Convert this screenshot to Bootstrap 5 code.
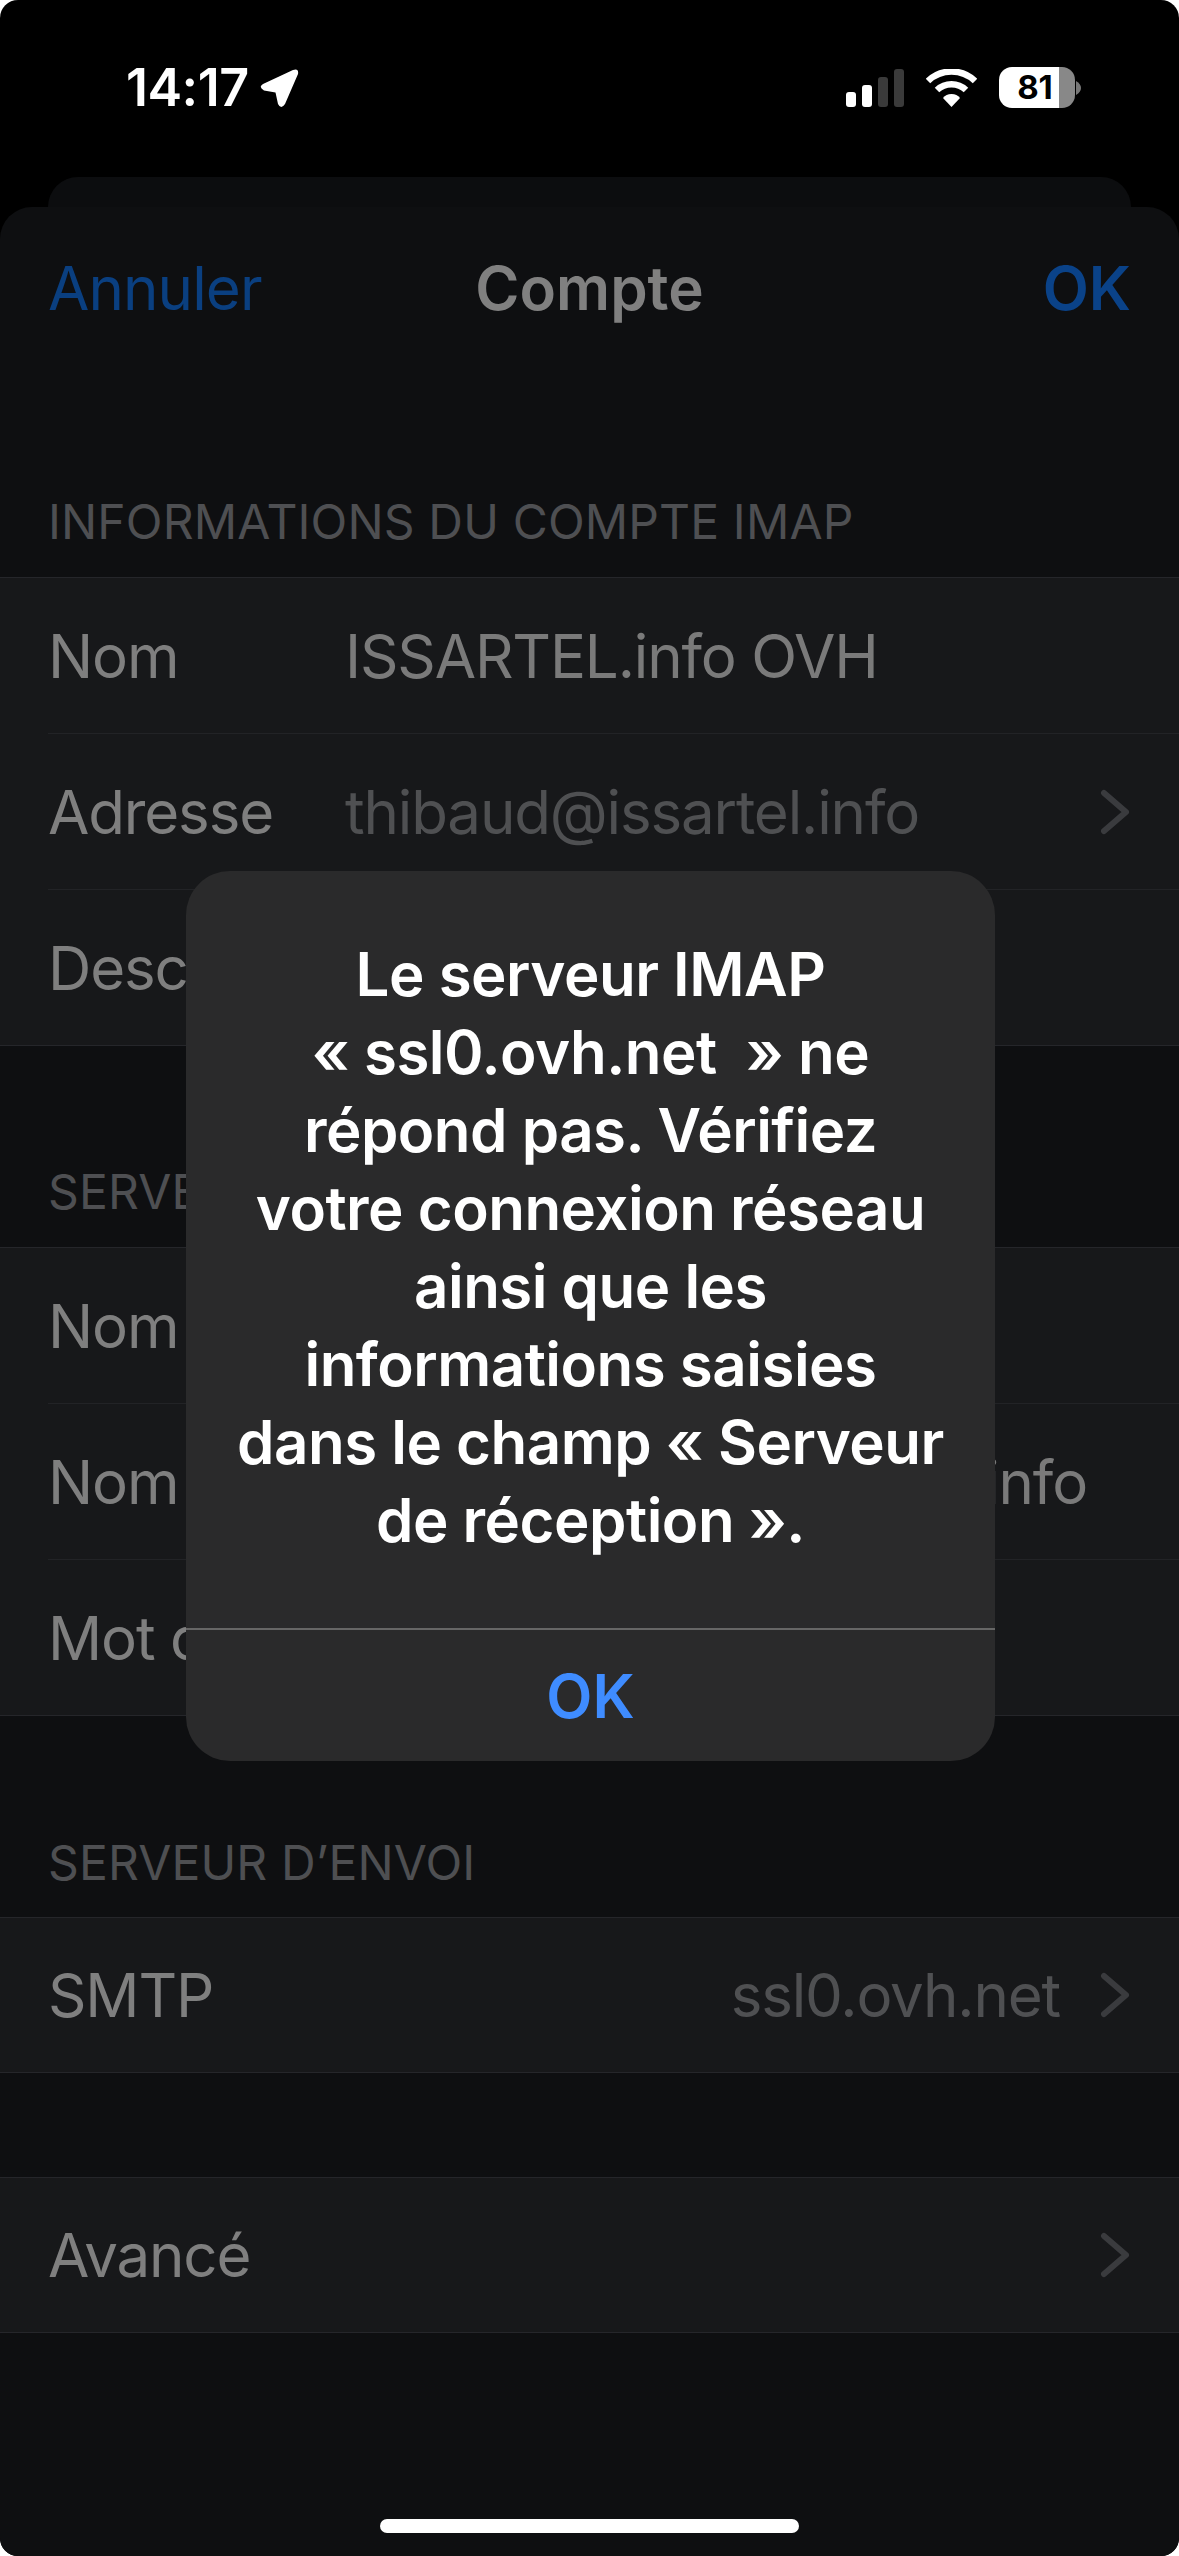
<!DOCTYPE html>
<html lang="fr">
<head>
    <meta charset="UTF-8">
    <meta name="viewport" content="width=device-width, initial-scale=1.0">
    <title>Compte</title>
    <link href="https://cdn.jsdelivr.net/npm/bootstrap@5.3.0/dist/css/bootstrap.min.css" rel="stylesheet">
    <style>
        html, body { height: 2556px; overflow: hidden; }
        body { background: #fff; font-family: Inter, "Liberation Sans", sans-serif; color: #7f7f7f; }
        .phone { position: relative; width: 1179px; height: 2556px; overflow: hidden; background: #000; border-radius: 18px; }

        /* status bar */
        .status-bar { height: 177px; padding: 67px 98px 0 126px; align-items: flex-start; }
        .clock { width: 121px; font-size: 52px; line-height: 42px; font-weight: 600; color: #fff; letter-spacing: -.5px; white-space: nowrap; }
        .clock-arrow { margin-left: 13px; margin-top: 2px; }
        .status-icons { gap: 22px; }
        .batt { width: 76px; height: 41px; border-radius: 13px; overflow: hidden; background: linear-gradient(90deg, #fff 79%, #888 79%); color: #000; font-size: 33px; font-weight: 700; line-height: 41px; text-align: center; padding-right: 4px; }

        /* sheets */
        .sheet-back { height: 30px; margin: 0 48px; background: #0c0d0f; border-radius: 30px 30px 0 0; }
        .sheet { height: 2349px; background: #0e0f11; border-radius: 32px 32px 0 0; }
        .sheet-nav { height: 162px; padding: 0 48px; font-size: 60px; }
        .nav-side { flex: 1 1 0; }
        .nav-cancel { color: #0a3f80; letter-spacing: -.9px; }
        .nav-title { color: #808080; font-weight: 600; }
        .nav-ok { color: #0a4288; font-weight: 600; text-align: right; }

        .group-title { padding: 0 48px 25px; font-size: 48px; line-height: 60px; color: #4e4f52; letter-spacing: .15px; }
        .group-title-1 { height: 208px; }
        .group-title-2 { height: 201px; }
        .group-title-3 { height: 201px; padding-bottom: 24px; }
        .group-gap { height: 104px; }

        .settings-list { background: #17181a; border-top: 1px solid #25262a; border-bottom: 1px solid #25262a; border-radius: 0; }
        .settings-list .list-group-item { background: transparent; border: 0; padding: 0 0 0 48px; color: #7f7f7f; font-size: 60px; letter-spacing: -1.15px; }
        .row-inner { height: 155px; padding-right: 49px; }
        .list-group-item + .list-group-item .row-inner { border-top: 1px solid #222326; height: 156px; }
        .list-group-item:only-child .row-inner { height: 154px; }
        .row-label { flex: none; }
        .field-label { width: 297px; }
        .val { color: #7a7a7a; white-space: nowrap; }
        .val-dim { color: #4f5052; white-space: nowrap; }
        .val-end { margin-right: 43px; }
        .val-chev { margin-right: 40px; }
        .chev { flex: none; width: 30px; height: 46px; }

        .home-bar { width: 419px; height: 14px; margin: 186px auto 0; background: #fff; border-radius: 7px; }

        /* alert */
        .alert-box { position: absolute; left: 186px; top: 871px; width: 809px; height: 890px; background: #2a2a2b; border-radius: 44px; color: #fff; overflow: hidden; }
        .alert-msg { height: 757px; padding-top: 64px; font-size: 60px; line-height: 78px; font-weight: 600; text-align: center; letter-spacing: -.5px; }
        .alert-action { height: 133px; border-top: 2px solid #666; color: #3f8cff; font-size: 60px; font-weight: 600; }
    </style>
</head>
<body>
    <div class="phone">
        <!-- status bar -->
        <div class="status-bar d-flex justify-content-between">
            <div class="d-flex align-items-start">
                <span class="clock">14:17</span>
                <svg class="clock-arrow" width="39" height="39" viewBox="0 0 39 39"><path d="M3 15 L33 1 Q39 -1 38 5 L25 35 Q21 41 18 35 L15.5 23.5 L4 21.5 Q-2 18 3 15Z" fill="#fff"/></svg>
            </div>
            <div class="status-icons d-flex align-items-center align-self-start">
                <svg width="58" height="38" viewBox="0 0 58 38"><rect x="0" y="23" width="10" height="15" rx="3" fill="#fff"/><rect x="16" y="16" width="10" height="22" rx="3" fill="#fff"/><rect x="32" y="8" width="10" height="30" rx="3" fill="#3a3a3a"/><rect x="48" y="0" width="10" height="38" rx="3" fill="#3a3a3a"/></svg>
                <svg width="51" height="38" viewBox="0 0 51 38"><path d="M2 12 A34 34 0 0 1 49 12" fill="none" stroke="#fff" stroke-width="6.5"/><path d="M11 21 A21 21 0 0 1 40 21" fill="none" stroke="#fff" stroke-width="6.5"/><path d="M25.5 25 Q20 25 17 29 L25.5 38 L34 29 Q31 25 25.5 25Z" fill="#fff"/></svg>
                <div class="d-flex align-items-center">
                    <div class="batt">81</div>
                    <svg width="6" height="14" viewBox="0 0 6 14"><path d="M1 0 Q6 3 6 7 Q6 11 1 14Z" fill="#777"/></svg>
                </div>
            </div>
        </div>

        <div class="sheet-back"></div>
        <div class="sheet d-flex flex-column">
            <div class="sheet-nav d-flex justify-content-between align-items-center">
                <span class="nav-side nav-cancel">Annuler</span>
                <span class="nav-title">Compte</span>
                <span class="nav-side nav-ok">OK</span>
            </div>

            <div class="group-title group-title-1 d-flex align-items-end">INFORMATIONS DU COMPTE IMAP</div>
            <ul class="settings-list list-group">
                <li class="list-group-item"><div class="row-inner d-flex align-items-center"><span class="row-label field-label">Nom</span><span class="val">ISSARTEL.info OVH</span></div></li>
                <li class="list-group-item"><div class="row-inner d-flex align-items-center"><span class="row-label field-label">Adresse</span><span class="val-dim">thibaud@issartel.info</span><svg class="chev ms-auto" viewBox="0 0 30 46"><path d="M4 4 L26 23 L4 42" fill="none" stroke="#3a3b3e" stroke-width="6" stroke-linecap="round" stroke-linejoin="round"/></svg></div></li>
                <li class="list-group-item"><div class="row-inner d-flex align-items-center"><span class="row-label field-label">Description</span></div></li>
            </ul>

            <div class="group-title group-title-2 d-flex align-items-end">SERVEUR DE RÉCEPTION</div>
            <ul class="settings-list list-group">
                <li class="list-group-item"><div class="row-inner d-flex align-items-center"><span class="row-label">Nom d'hôte</span></div></li>
                <li class="list-group-item"><div class="row-inner d-flex align-items-center"><span class="row-label">Nom d'utilisateur</span><span class="val ms-auto val-end">thibaud@issartel.info</span></div></li>
                <li class="list-group-item"><div class="row-inner d-flex align-items-center"><span class="row-label">Mot de passe</span></div></li>
            </ul>

            <div class="group-title group-title-3 d-flex align-items-end">SERVEUR D’ENVOI</div>
            <ul class="settings-list list-group">
                <li class="list-group-item"><div class="row-inner d-flex align-items-center"><span class="row-label">SMTP</span><span class="val-dim ms-auto val-chev">ssl0.ovh.net</span><svg class="chev" viewBox="0 0 30 46"><path d="M4 4 L26 23 L4 42" fill="none" stroke="#3a3b3e" stroke-width="6" stroke-linecap="round" stroke-linejoin="round"/></svg></div></li>
            </ul>

            <div class="group-gap"></div>
            <ul class="settings-list list-group">
                <li class="list-group-item"><div class="row-inner d-flex align-items-center"><span class="row-label">Avancé</span><svg class="chev ms-auto" viewBox="0 0 30 46"><path d="M4 4 L26 23 L4 42" fill="none" stroke="#3a3b3e" stroke-width="6" stroke-linecap="round" stroke-linejoin="round"/></svg></div></li>
            </ul>

            <div class="home-bar"></div>
        </div>

        <!-- alert over the sheet -->
        <div class="alert-box d-flex flex-column">
            <div class="alert-msg">Le serveur IMAP<br>« ssl0.ovh.net &nbsp;» ne<br>répond pas. Vérifiez<br>votre connexion réseau<br>ainsi que les<br>informations saisies<br>dans le champ « Serveur<br>de réception ».</div>
            <div class="alert-action d-flex align-items-center justify-content-center">OK</div>
        </div>
    </div>
    <script src="https://cdn.jsdelivr.net/npm/bootstrap@5.3.0/dist/js/bootstrap.bundle.min.js"></script>
</body>
</html>
